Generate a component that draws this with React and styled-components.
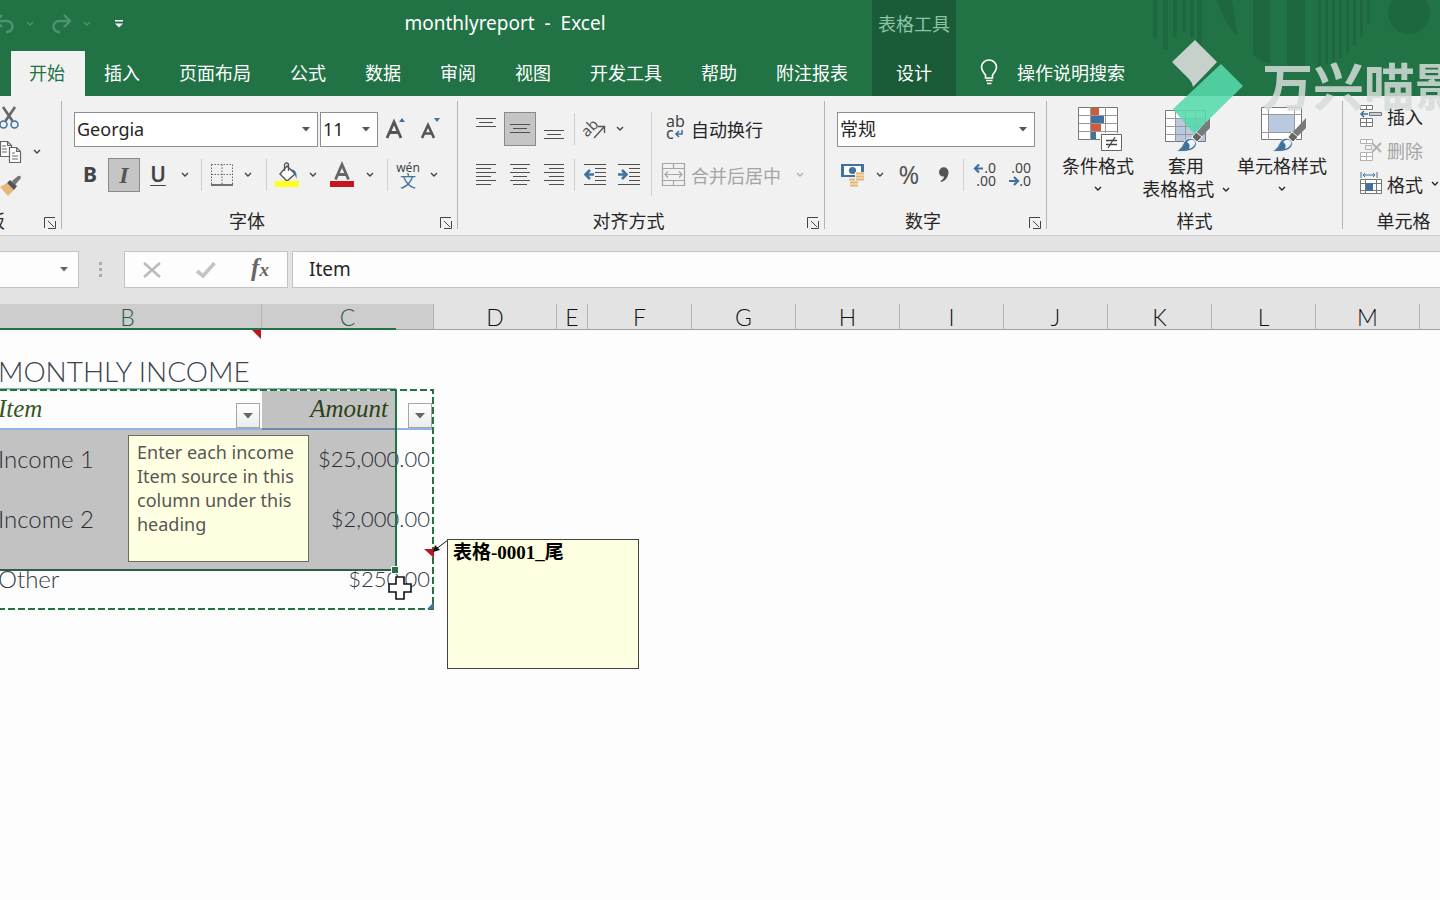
import React from "react";
import styled, { createGlobalStyle } from "styled-components";

const UI_FONT = `"Noto Sans", "Noto Sans CJK SC", sans-serif`;
const SHEET_FONT = `Lato, "Noto Sans CJK SC", sans-serif`;

const TABS = ["开始", "插入", "页面布局", "公式", "数据", "审阅", "视图", "开发工具", "帮助", "附注报表"];

const COLUMNS = [
  { name: "B", width: 268, selected: true },
  { name: "C", width: 172, selected: true },
  { name: "D", width: 123 },
  { name: "E", width: 31 },
  { name: "F", width: 104 },
  { name: "G", width: 104 },
  { name: "H", width: 104 },
  { name: "I", width: 104 },
  { name: "J", width: 104 },
  { name: "K", width: 104 },
  { name: "L", width: 104 },
  { name: "M", width: 104 },
];

const INCOME = [
  { item: "Income 1", amount: "$25,000.00" },
  { item: "Income 2", amount: "$2,000.00" },
  { item: "Other", amount: "$250.00" },
];

const Chevron = () => (
  <svg width="8" height="6" viewBox="0 0 8 6" fill="none" stroke="currentColor" strokeWidth="1.4">
    <path d="M1 1l3 3 3-3" />
  </svg>
);

const Lines = ({ rows, height = 22 }) => (
  <svg width="20" height={height} viewBox={`0 0 20 ${height}`} stroke="#505050">
    {rows.map(([x1, x2, y]) => (
      <path key={y} d={`M${x1} ${y + 0.5}H${x2}`} />
    ))}
  </svg>
);

const UndoIcon = ({ flip }) => (
  <svg width="22" height="20" viewBox="0 0 22 20" fill="none" stroke="currentColor" strokeWidth="2.4">
    <g transform={flip ? "translate(22 0) scale(-1 1)" : undefined}>
      <path d="M8 1L2 7l6 6M2 7h11a5.500 5.500 0 0 1 0 11h-1" />
    </g>
  </svg>
);

const ScissorsIcon = () => (
  <svg width="20" height="22" viewBox="0 0 20 22" fill="none">
    <path d="M3 0l9.500 14M15 0L5.500 14" stroke="#666" strokeWidth="2.600" />
    <circle cx="3.500" cy="17.500" r="3.500" stroke="#41719c" strokeWidth="1.500" />
    <circle cx="14.500" cy="17.500" r="3.500" stroke="#41719c" strokeWidth="1.500" />
  </svg>
);

const CopyIcon = () => (
  <svg width="22" height="22" viewBox="0 0 22 22" fill="#fff" stroke="#666" strokeWidth="1.200">
    <path d="M.5.5h7l4 4v11H.5zM7.500.5v4h4" />
    <path d="M9.500 6.500h7l4 4v11h-11zM16.500 6.500v4h4" />
    <path d="M2 5h4M2 8h5M2 11h5M12 12h3M12 15h6M12 18h6" />
  </svg>
);

const PainterIcon = () => (
  <svg width="22" height="22" viewBox="0 0 22 22">
    <path d="M0 12l7-4 7 7-6 6z" fill="#e5b77d" />
    <path d="M7 8l3-3 7 6-3 4z" fill="#555" />
    <path d="M12 6l6-5q3-1 3 2l-6 7z" fill="#777" />
  </svg>
);

const BordersIcon = () => (
  <svg width="22" height="22" viewBox="0 0 22 22" fill="none" stroke="#666">
    <path d="M.5.5h21v20M.5.5v20M11 .5v20M.5 10.500h21" strokeDasharray="1.500 1.500" />
    <path d="M0 21h22" stroke="#444" strokeWidth="1.500" />
  </svg>
);

const FillIcon = () => (
  <svg width="24" height="26" viewBox="0 0 24 26" fill="none">
    <path d="M12 4l8 8-8 7-7-7z" fill="#fff" stroke="#555" strokeWidth="1.400" />
    <path d="M9.500 9V3a2 2 0 0 1 4 0v6" stroke="#555" strokeWidth="1.300" />
    <path d="M16 7c5 1 6 4 5.500 10-1-3-2-5-3-6z" fill="#41719c" />
    <path d="M0 19h24v6H0z" fill="#ffff1e" />
  </svg>
);

const FontColorIcon = () => (
  <svg width="24" height="26" viewBox="0 0 24 26">
    <path d="M5.500 17.500L12 2.500l6.500 15M8 12.500h8" fill="none" stroke="#666" strokeWidth="2.800" />
    <path d="M0 19h24v6H0z" fill="#c8141c" />
  </svg>
);

const OrientationIcon = () => (
  <svg width="22" height="22" viewBox="0 0 22 22" fill="none" stroke="#555" strokeWidth="1.400">
    <text x="-1" y="14" transform="rotate(-45 8 12)" fontSize="15" fill="#555" stroke="none">ab</text>
    <path d="M10 20L20 9M14 8.500h6.500V15" />
  </svg>
);

const IndentIcon = ({ right }) => (
  <svg width="23" height="22" viewBox="0 0 23 22" fill="none" stroke="#505050">
    <path d="M0 .5h22M11 4.500h11M11 8.500h11M11 12.500h11M11 16.500h11M0 20.500h22" />
    <g transform={right ? "translate(10 0) scale(-1 1)" : undefined}>
      <path d="M10 10.500H2M6 6l-4.500 4.500L6 15" stroke="#41719c" strokeWidth="2.600" />
    </g>
  </svg>
);

const WrapIcon = () => (
  <svg width="24" height="24" viewBox="0 0 24 24" fill="none">
    <text x="4" y="10" fontSize="16" fill="#444">ab</text>
    <text x="4" y="22" fontSize="16" fill="#444">c</text>
    <path d="M20 13v4h-6M17 14l-3 3 3 3" stroke="#41719c" strokeWidth="1.600" />
  </svg>
);

const MergeIcon = () => (
  <svg width="24" height="24" viewBox="0 0 24 24" fill="none" stroke="#a5a5a5" strokeWidth="1.200">
    <path d="M.5.5h22v22H.5zM.5 5.500h22M.5 17.500h22M11.500.5v5M11.500 17.500v5M3 11.500h17M6 8.500l-3 3 3 3M17 8.500l3 3-3 3" />
  </svg>
);

const MoneyIcon = () => (
  <svg width="24" height="24" viewBox="0 0 24 24">
    <path d="M0 1h23v13H0z" fill="#41719c" />
    <path d="M3 3h17v9H3z" fill="#fff" />
    <circle cx="11.500" cy="7.500" r="3.600" fill="#41719c" />
    <path d="M14 9h9v9h-6v5H8v-8h6z" fill="#f1f1f1" />
    <path d="M15 10.500h8M15 13.500h8M15 16.500h8M8 16.500h6M9 19.500h8M9 22.500h8" stroke="#e3b673" strokeWidth="2" />
  </svg>
);

const DecimalIcon = ({ decrease }) => (
  <svg width="24" height="24" viewBox="0 0 24 24" fill="none">
    <text x="23" y="10" fontSize="14" fill="#444" textAnchor="end">{decrease ? ".00" : ".0"}</text>
    <text x="23" y="23" fontSize="14" fill="#444" textAnchor="end">{decrease ? ".0" : ".00"}</text>
    <path
      d={decrease ? "M1 18h8M6 14l4 4-4 4" : "M10 5.500H2M6 1.500l-4 4 4 4"}
      stroke="#41719c"
      strokeWidth="2.200"
    />
  </svg>
);

const BulbIcon = () => (
  <svg width="18" height="26" viewBox="0 0 18 26" fill="none" stroke="#fff" strokeWidth="1.600">
    <path d="M5.500 19v-3C3 13 1.500 11 1.500 8a7.500 7 0 0 1 15 0c0 3-1.500 5-4 8v3zM6 21.500h6.500M7 24.500h4.500" />
  </svg>
);

const LauncherIcon = () => (
  <svg width="12" height="12" viewBox="0 0 12 12" fill="none" stroke="#444">
    <path d="M.5 11V.5H11M4 4l6 6M11.500 4v7.500H4" />
  </svg>
);

const ConditionalIcon = () => (
  <svg width="44" height="46" viewBox="0 0 44 46" fill="none">
    <path d="M.5 1.500h39v32H.5z" fill="#fff" stroke="#777" />
    <path d="M.5 9.500h39M.5 17.500h39M.5 25.500h39M12.500 1v33M27.500 1v33" stroke="#999" />
    <path d="M13 2h8v7h-8zM13 18h10v7H13z" fill="#cd5b3f" />
    <path d="M13 10h13v7H13zM13 26h5v7h-5z" fill="#41719c" />
    <path d="M22 27h22v19H22z" fill="#f1f1f1" />
    <path d="M23.500 28.500h20v16h-20z" fill="#fff" stroke="#666" />
    <path d="M28 34.500h11M28 38.500h11M37 31l-7 11" stroke="#444" strokeWidth="1.300" />
  </svg>
);

const Brush = () => (
  <g>
    <path d="M45 12v10l-9 9-5-4z" fill="#7a7a7a" />
    <path d="M31 26l6 5-5 5-5-5z" fill="#666" stroke="#f1f1f1" />
    <path d="M11 45c5-2 6-5 8-9 3-5 10-5 12 0 2 7-7 11-20 9z" fill="#41719c" stroke="#f1f1f1" />
    <path d="M22 36c3-3 8-3 8 1 0 3-3 5-6 6 1-3 1-5-2-7z" fill="#eef5fb" />
  </g>
);

const TableStyleIcon = () => (
  <svg width="46" height="46" viewBox="0 0 46 46" fill="none">
    <path d="M.5 4.500h40v31H.5z" fill="#fff" stroke="#777" />
    <path d="M11 13h29v22H11z" fill="#b9c9df" />
    <path d="M.5 12.500h40M.5 20.500h40M.5 28.500h40M10.500 4v32M20.500 4v32M30.500 4v32" stroke="#999" />
    <Brush />
  </svg>
);

const CellStyleIcon = () => (
  <svg width="46" height="46" viewBox="0 0 46 46" fill="none">
    <path d="M.5 1.500h40v32H.5z" fill="#fff" stroke="#777" />
    <path d="M7.500 1v33M33.500 1v33M.5 8.500h40M.5 26.500h40" stroke="#999" />
    <path d="M8 9h25v17H8z" fill="#b9c9df" />
    <Brush />
  </svg>
);

const CellsIcon = ({ kind }) => (
  <svg width="22" height="24" viewBox="0 0 22 24" fill="none" stroke={kind === "delete" ? "#b1b1b1" : "#777"}>
    {kind === "format" ? (
      <g>
        <path d="M1 0v6M17 0v6M3 3h12M5 1L3 3l2 2M13 1l2 2-2 2" stroke="#41719c" />
        <path d="M.5 7.500h21v14H.5zM.5 11.500h21M.5 18.500h21M5.500 7.500v14M16.500 7.500v14" fill="#fff" />
        <path d="M6 11h7v8H6z" fill="#41719c" stroke="none" />
      </g>
    ) : (
      <g>
        <path d="M.5 1.500h12v4H.5zM6.500 1.500v4M.5 14.500h12v8H.5zM.5 18.500h12M6.500 14.500v8" fill="#fff" />
        {kind === "insert" ? (
          <g>
            <path d="M9.500 8.500h12v3h-12z" fill="#c7cfdd" />
            <path d="M8 10H1M4 7l-3 3 3 3" stroke="#41719c" strokeWidth="1.500" />
          </g>
        ) : (
          <g>
            <path d="M5.500 7.500h6v4h-6z" />
            <path d="M12 5l9 9M21 5l-9 9" strokeWidth="2" />
          </g>
        )}
      </g>
    )}
  </svg>
);

const HeaderArt = () => (
  <Art width="300" height="70" viewBox="0 0 300 70" fill="#1e6840">
    <path d="M13 0h4v38h-4zM23 0h5v50h-5zM33 0h4v38h-4zM42 0h4v32h-4zM50 0h4v38h-4zM57 0h5v50h-5z" />
    <path d="M77 0h15l6 36q-12-8-21-36zM113 0h17v64q-10-2-17-10zM147 0h18v66h-18z" />
    <path d="M178 0h3v66h-3zM185 0h3v64h-3zM192 0h3v62h-3zM199 0h3v58h-3zM206 0h3v53h-3zM213 0h3v46h-3zM220 0h3v37h-3zM227 0h3v24h-3z" />
    <circle cx="269" cy="13" r="21" />
  </Art>
);

const Group = ({ title, width, launcher, children }) => (
  <GroupBox $width={width}>
    {children}
    <GroupFooter>
      <GroupTitle>{title}</GroupTitle>
      {launcher && <Launcher aria-label={`${title}设置`}><LauncherIcon /></Launcher>}
    </GroupFooter>
  </GroupBox>
);

const Drop = ({ width = 18, disabled }) => (
  <ToolButton $width={width} aria-label="更多选项" disabled={disabled}><Chevron /></ToolButton>
);

const Header = () => (
  <HeaderBar>
    <HeaderMain>
      <TitleRow>
        <QuickAccess>
          <QuickButton $width={16} aria-label="撤消" disabled><UndoIcon /></QuickButton>
          <QuickButton $width={27} aria-label="撤消选项" disabled><Chevron /></QuickButton>
          <QuickButton $width={35} aria-label="恢复" disabled><UndoIcon flip /></QuickButton>
          <QuickButton $width={18} aria-label="恢复选项" disabled><Chevron /></QuickButton>
          <QuickButton $width={46} aria-label="自定义快速访问工具栏">
            <svg width="8" height="8" viewBox="0 0 8 8" fill="#fff"><path d="M0 0h8v1.500H0zM0 3.500h8l-4 4z" /></svg>
          </QuickButton>
        </QuickAccess>
        <DocTitle>monthlyreport&nbsp; -&nbsp; Excel</DocTitle>
      </TitleRow>
      <Tabs>
        {TABS.map((tab, i) => <Tab key={tab} $active={i === 0}>{tab}</Tab>)}
      </Tabs>
    </HeaderMain>
    <ContextTabs>
      <ContextTitle>表格工具</ContextTitle>
      <ContextTab>设计</ContextTab>
    </ContextTabs>
    <HeaderSide>
      <HeaderArt />
      <TellMe><BulbIcon />操作说明搜索</TellMe>
    </HeaderSide>
  </HeaderBar>
);

const Ribbon = () => (
  <RibbonBar>
    <GroupBox $width={62}>
      <ClipboardTools>
        <ToolButton $width={20} $align="flex-start" aria-label="剪切"><ScissorsIcon /></ToolButton>
        <ToolRow>
          <ToolButton $width={22} $align="flex-end" aria-label="复制"><CopyIcon /></ToolButton>
          <Drop width={26} />
        </ToolRow>
        <ToolButton $width={22} $align="flex-start" aria-label="格式刷"><PainterIcon /></ToolButton>
      </ClipboardTools>
      <GroupFooter>
        <ClippedTitle>剪贴板</ClippedTitle>
        <Launcher aria-label="剪贴板设置"><LauncherIcon /></Launcher>
      </GroupFooter>
    </GroupBox>

    <Group title="字体" width={396} launcher>
      <GroupTools>
        <ToolRow>
          <SelectBox $width={244}>
            <select aria-label="字体" defaultValue="Georgia"><option>Georgia</option></select>
          </SelectBox>
          <SelectBox $width={58}>
            <select aria-label="字号" defaultValue="11"><option>11</option></select>
          </SelectBox>
          <ToolButton $width={32} aria-label="增大字号">
            <svg width="22" height="24" viewBox="0 0 22 24">
              <path d="M2 21L9 5l7 16M4.500 15.500h9" fill="none" stroke="#555" strokeWidth="2.800" />
              <path d="M14 5l3-4 3 4z" fill="#41719c" />
            </svg>
          </ToolButton>
          <ToolButton $width={34} aria-label="减小字号">
            <svg width="22" height="24" viewBox="0 0 22 24">
              <path d="M2 21L8 8l6 13M4.500 16.500h7" fill="none" stroke="#555" strokeWidth="2.600" />
              <path d="M14 1h6l-3 4z" fill="#41719c" />
            </svg>
          </ToolButton>
        </ToolRow>
        <ToolRow>
          <ToolButton $width={32}><BoldMark>B</BoldMark></ToolButton>
          <ToolButton $width={32} $pressed><ItalicMark>I</ItalicMark></ToolButton>
          <ToolButton $width={32}><UnderlineMark>U</UnderlineMark></ToolButton>
          <Drop />
          <Divider $margin={5} />
          <ToolButton $width={26} aria-label="边框"><BordersIcon /></ToolButton>
          <Drop width={22} />
          <Divider $margin={5} />
          <ToolButton $width={26} aria-label="填充颜色"><FillIcon /></ToolButton>
          <Drop width={22} />
          <ToolButton $width={32} aria-label="字体颜色"><FontColorIcon /></ToolButton>
          <Drop width={20} />
          <Divider $margin={5} />
          <ToolButton $width={26}><Pinyin>wén<b>文</b></Pinyin></ToolButton>
          <Drop width={22} />
        </ToolRow>
      </GroupTools>
    </Group>

    <Group title="对齐方式" width={367} launcher>
      <SplitTools>
        <ToolStack>
          <ToolRow>
            <ToolButton $width={32} aria-label="顶端对齐"><Lines rows={[[0, 20, 0], [3, 17, 4], [0, 20, 8]]} /></ToolButton>
            <ToolButton $width={32} $pressed aria-label="垂直居中"><Lines rows={[[0, 20, 6], [3, 17, 10], [0, 20, 14]]} /></ToolButton>
            <ToolButton $width={32} aria-label="底端对齐"><Lines rows={[[0, 20, 12], [3, 17, 16], [0, 20, 20]]} /></ToolButton>
            <Divider $margin={2} />
            <ToolButton $width={32} aria-label="方向"><OrientationIcon /></ToolButton>
            <Drop width={14} />
          </ToolRow>
          <ToolRow>
            <ToolButton $width={32} aria-label="左对齐"><Lines rows={[[0, 20, 0], [0, 15, 4], [0, 20, 8], [0, 15, 12], [0, 20, 16], [0, 15, 20]]} /></ToolButton>
            <ToolButton $width={32} aria-label="居中"><Lines rows={[[0, 20, 0], [3, 17, 4], [0, 20, 8], [3, 17, 12], [0, 20, 16], [3, 17, 20]]} /></ToolButton>
            <ToolButton $width={32} aria-label="右对齐"><Lines rows={[[0, 20, 0], [5, 20, 4], [0, 20, 8], [5, 20, 12], [0, 20, 16], [5, 20, 20]]} /></ToolButton>
            <Divider $margin={2} />
            <ToolButton $width={32} aria-label="减少缩进量"><IndentIcon /></ToolButton>
            <ToolButton $width={32} aria-label="增加缩进量"><IndentIcon right /></ToolButton>
          </ToolRow>
        </ToolStack>
        <TallDivider />
        <ToolStack>
          <ToolRow><TextButton><WrapIcon />自动换行</TextButton></ToolRow>
          <ToolRow>
            <TextButton disabled><MergeIcon />合并后居中</TextButton>
            <Drop width={34} disabled />
          </ToolRow>
        </ToolStack>
      </SplitTools>
    </Group>

    <Group title="数字" width={222} launcher>
      <GroupTools>
        <ToolRow>
          <SelectBox $width={198}>
            <select aria-label="数字格式" defaultValue="常规"><option>常规</option></select>
          </SelectBox>
        </ToolRow>
        <ToolRow>
          <ToolButton $width={32} aria-label="会计数字格式"><MoneyIcon /></ToolButton>
          <Drop />
          <ToolButton $width={36}><PercentMark>%</PercentMark></ToolButton>
          <ToolButton $width={30} aria-label="千位分隔样式">
            <svg width="12" height="16" viewBox="0 0 12 16" fill="#555">
              <path d="M1 5a4.500 4.500 0 0 1 9.500 0c0 5-3 9-7.500 10l-.5-1c2-1 3.500-3 3.500-4.500C3 10 1 8 1 5z" />
            </svg>
          </ToolButton>
          <Divider $margin={2} />
          <ToolButton $width={34} aria-label="增加小数位数"><DecimalIcon /></ToolButton>
          <ToolButton $width={32} aria-label="减少小数位数"><DecimalIcon decrease /></ToolButton>
        </ToolRow>
      </GroupTools>
    </Group>

    <Group title="样式" width={296}>
      <StyleTools>
        <BigButton $width={86}><ConditionalIcon /><span>条件格式</span><Chevron /></BigButton>
        <BigButton $width={90}>
          <TableStyleIcon />
          <span>套用</span>
          <span>表格格式 <Chevron /></span>
        </BigButton>
        <BigButton $width={102}><CellStyleIcon /><span>单元格样式</span><Chevron /></BigButton>
      </StyleTools>
    </Group>

    <Group title="单元格" width={122}>
      <CellTools>
        <CellButton $gap={12}><CellsIcon kind="insert" />插入<Chevron /></CellButton>
        <CellButton $gap={12} disabled><CellsIcon kind="delete" />删除<Chevron /></CellButton>
        <CellButton $gap={3}><CellsIcon kind="format" />格式<Chevron /></CellButton>
      </CellTools>
    </Group>
  </RibbonBar>
);

const FormulaBar = () => (
  <FormulaRow>
    <NameBox>
      <input aria-label="名称框" />
      <svg width="8" height="5" viewBox="0 0 8 5" fill="#666"><path d="M0 0h8L4 4.500z" /></svg>
    </NameBox>
    <Grip><i /><i /><i /></Grip>
    <FormulaButtons>
      <ToolButton $width={54} aria-label="取消">
        <svg width="18" height="16" viewBox="0 0 18 16" fill="none" stroke="#bbb" strokeWidth="2.600"><path d="M1 1l16 14M17 1L1 15" /></svg>
      </ToolButton>
      <ToolButton $width={54} aria-label="输入">
        <svg width="20" height="16" viewBox="0 0 20 16" fill="none" stroke="#c4c4c4" strokeWidth="3.600"><path d="M1 9l6 5L18.500 1" /></svg>
      </ToolButton>
      <ToolButton $width={54}><FxMark>f<small>x</small></FxMark></ToolButton>
    </FormulaButtons>
    <FormulaInput aria-label="编辑栏" defaultValue="Item" />
  </FormulaRow>
);

const FilterButton = ({ label }) => (
  <Filter aria-label={label}>
    <svg width="10" height="6" viewBox="0 0 10 6" fill="#666"><path d="M0 0h10L5 5.500z" /></svg>
  </Filter>
);

const Sheet = () => (
  <SheetArea>
    <Grid>
      <colgroup>
        {COLUMNS.map((col) => <Col key={col.name} $width={col.width} />)}
        <col />
      </colgroup>
      <thead>
        <tr>
          {COLUMNS.map((col) => (
            <ColumnHead key={col.name} scope="col" $selected={col.selected}>{col.name}</ColumnHead>
          ))}
          <ColumnHead aria-hidden="true" />
        </tr>
      </thead>
      <tbody>
        <tr><TitleCell colSpan={13}>MONTHLY INCOME</TitleCell></tr>
        <tr>
          <FieldCell><Field>Item<FilterButton label="筛选 Item" /></Field></FieldCell>
          <FieldCell><Field $end>Amount<FilterButton label="筛选 Amount" /></Field></FieldCell>
        </tr>
        {INCOME.map((row) => (
          <tr key={row.item}>
            <ItemCell>{row.item}</ItemCell>
            <AmountCell>{row.amount}</AmountCell>
          </tr>
        ))}
      </tbody>
    </Grid>

    <Overlay width="660" height="380" viewBox="0 0 660 380" fill="none">
      <path d="M262 86h133v181H0V126h262z" fill="#000" fillOpacity=".23" />
      <path d="M0 25h396" stroke="#217346" strokeWidth="2" />
      <path d="M0 86h396v181" stroke="#217346" strokeWidth="2" />
      <path d="M0 266h392" stroke="#2c5f45" strokeWidth="2" />
      <path d="M0 86h433v219H0" stroke="#fff" strokeWidth="2" />
      <path d="M0 85h396" stroke="#217346" />
      <path d="M0 86h433v219H0" stroke="#217346" strokeWidth="2" strokeDasharray="7 3" />
      <path d="M391.500 262.500h7v7h-7z" fill="#217346" stroke="#fff" />
      <path d="M252 26h9v9zM424 245h10v9z" fill="#c1121f" />
      <path d="M434 298v7h-7z" fill="#41719c" />
      <path d="M448 236l-12 9" stroke="#111" />
      <path d="M433 248l2-7 5 5z" fill="#111" />
      <path d="M396 273h8v7h7v8h-7v7h-8v-7h-7v-8h7z" fill="#fff" stroke="#111" strokeWidth="1.600" />
    </Overlay>
    <InputHint>Enter each income Item source in this column under this heading</InputHint>
    <CellComment>表格-0001_尾</CellComment>
  </SheetArea>
);

const Watermark = () => (
  <WatermarkBox>
    <svg width="74" height="100" viewBox="0 0 74 100">
      <path d="M25 0l22 22-24 25q-1-5-4-8L2 22z" fill="#d8dcd9" fillOpacity=".9" />
      <path d="M51 24l22 22-49 48L3 69z" fill="#55d9ab" fillOpacity=".88" />
    </svg>
    <span>万兴喵影</span>
  </WatermarkBox>
);

const App = () => (
  <Window>
    <GlobalStyle />
    <Header />
    <Ribbon />
    <FormulaBar />
    <Sheet />
    <Watermark />
  </Window>
);

const GlobalStyle = createGlobalStyle`
  * {
    box-sizing: border-box;
  }
  body {
    margin: 0;
    background: #fdfdfd;
    font-family: ${UI_FONT};
    font-size: 18px;
    color: #262626;
  }
  button, input, select {
    margin: 0;
    padding: 0;
    border: none;
    background: none;
    font: inherit;
    color: inherit;
  }
  svg {
    flex: none;
    overflow: visible;
  }
`;

const Window = styled.div`
  position: relative;
  display: flex;
  flex-direction: column;
  min-height: 100vh;
  overflow: hidden;
`;

const HeaderBar = styled.header`
  display: flex;
  height: 96px;
  background: #217346;
  color: #fff;
`;

const HeaderMain = styled.div`
  flex: none;
  padding-right: 4px;
`;

const TitleRow = styled.div`
  display: flex;
  align-items: center;
  height: 48px;
`;

const QuickAccess = styled.div`
  display: flex;
  align-items: center;
  width: 142px;
`;

const QuickButton = styled.button`
  display: flex;
  justify-content: ${({ $width }) => ($width === 16 ? "flex-end" : "center")};
  width: ${({ $width }) => $width}px;
  color: #4f936c;
`;

const DocTitle = styled.div`
  flex: 1;
  padding-bottom: 2px;
  font-size: 19px;
  text-align: center;
`;

const Tabs = styled.nav`
  display: flex;
  gap: 1px;
  height: 48px;
  padding: 3px 0 0 11px;
`;

const Tab = styled.button`
  padding: 0 20px 4px 18px;
  white-space: nowrap;
  background: ${({ $active }) => ($active ? "#f1f1f1" : "none")};
  color: ${({ $active }) => ($active ? "#217346" : "#fff")};
`;

const ContextTabs = styled.div`
  display: flex;
  flex: none;
  flex-direction: column;
  width: 84px;
  background: #1a5c38;
`;

const ContextTitle = styled.div`
  height: 51px;
  line-height: 48px;
  text-align: center;
  color: #8fc3a6;
`;

const ContextTab = styled.button`
  flex: 1;
  padding-bottom: 4px;
`;

const HeaderSide = styled.div`
  position: relative;
  display: flex;
  flex: 1;
  align-items: flex-end;
`;

const Art = styled.svg`
  position: absolute;
  top: 0;
  right: 0;
`;

const TellMe = styled.button`
  display: flex;
  gap: 19px;
  align-items: center;
  height: 45px;
  padding: 0 0 4px 24px;
  white-space: nowrap;
`;

const RibbonBar = styled.div`
  display: flex;
  height: 140px;
  border-bottom: 1px solid #d2d2d2;
  background: #f1f1f1;
`;

const GroupBox = styled.section`
  display: flex;
  flex: none;
  flex-direction: column;
  justify-content: space-between;
  width: ${({ $width }) => $width}px;
  margin: 5px 0 6px;
  border-right: 1px solid #b4b4b4;
`;

const GroupFooter = styled.div`
  display: flex;
  align-items: center;
  height: 16px;
`;

const GroupTitle = styled.div`
  flex: 1;
  text-align: center;
  line-height: 18px;
`;

const ClippedTitle = styled.div`
  display: flex;
  justify-content: flex-end;
  width: 5px;
  margin-right: auto;
  overflow: hidden;
  white-space: nowrap;
  line-height: 18px;
`;

const Launcher = styled.button`
  display: flex;
  padding: 4px 5px 0 8px;
`;

const GroupTools = styled.div`
  display: flex;
  flex-direction: column;
  gap: 12px;
  padding: 11px 0 0 12px;
`;

const SplitTools = styled.div`
  display: flex;
  padding: 11px 0 0 12px;
`;

const ToolStack = styled.div`
  display: flex;
  flex-direction: column;
  gap: 12px;
`;

const ToolRow = styled.div`
  display: flex;
  gap: 2px;
  align-items: center;
  height: 34px;
`;

const ToolButton = styled.button`
  display: flex;
  flex: none;
  align-items: center;
  justify-content: ${({ $align }) => $align || "center"};
  width: ${({ $width }) => $width}px;
  height: 34px;
  border: ${({ $pressed }) => ($pressed ? "1px solid #8a8a8a" : "none")};
  background: ${({ $pressed }) => ($pressed ? "#c5c5c5" : "none")};
  color: ${({ disabled }) => (disabled ? "#b1b1b1" : "#444")};
`;

const TextButton = styled.button`
  display: flex;
  gap: 5px;
  align-items: center;
  white-space: nowrap;
  color: ${({ disabled }) => (disabled ? "#a5a5a5" : "#262626")};
`;

const CellButton = styled(TextButton)`
  height: 24px;

  svg:last-child {
    margin-left: ${({ $gap }) => $gap}px;
  }
`;

const Divider = styled.i`
  width: 1px;
  height: 32px;
  margin: 0 ${({ $margin }) => $margin}px;
  background: #d0d0d0;
`;

const TallDivider = styled.i`
  width: 1px;
  height: 84px;
  margin: 0 10px 0 6px;
  background: #d0d0d0;
`;

const SelectBox = styled.label`
  width: ${({ $width }) => $width}px;
  height: 35px;
  border: 1px solid #8e8e8e;
  background: #fff;

  select {
    width: 100%;
    height: 100%;
    padding: 0 2px;
    appearance: none;
    background: url("data:image/svg+xml,%3Csvg xmlns='http://www.w3.org/2000/svg' width='8' height='5'%3E%3Cpath d='M0 0h8L4 4.500z' fill='%23555'/%3E%3C/svg%3E") no-repeat right 7px center;
  }
`;

const BoldMark = styled.b`
  padding-bottom: 2px;
  font-size: 21px;
  color: #444;
`;

const ItalicMark = styled.i`
  font: italic bold 24px "Liberation Serif", serif;
  color: #555;
`;

const UnderlineMark = styled.u`
  padding-bottom: 2px;
  font-size: 21px;
  font-weight: 600;
  text-decoration-thickness: 1px;
  text-underline-offset: 3px;
`;

const Pinyin = styled.span`
  display: flex;
  flex-direction: column;
  align-items: center;
  font-size: 12px;
  line-height: 11px;

  b {
    font-size: 16px;
    font-weight: 400;
    line-height: 16px;
    color: #41719c;
  }
`;

const PercentMark = styled.span`
  padding-bottom: 2px;
  font-size: 25px;
  color: #555;
`;

const StyleTools = styled.div`
  display: flex;
  padding: 5px 0 0 8px;
`;

const BigButton = styled.button`
  display: flex;
  flex-direction: column;
  align-items: center;
  width: ${({ $width }) => $width}px;
  line-height: 23px;
  white-space: nowrap;

  svg:first-child {
    margin: 0 0 3px 4px;
  }
  span + svg {
    margin-top: 8px;
  }
  span svg:last-child {
    margin: 0 0 3px 3px;
  }
`;

const CellTools = styled.div`
  display: flex;
  flex-direction: column;
  gap: 10px;
  padding: 3px 0 0 17px;
`;

const ClipboardTools = styled.div`
  display: flex;
  flex-direction: column;
  height: 102px;
`;

const FormulaRow = styled.div`
  display: flex;
  height: 68px;
  padding: 15px 0 16px;
  background: #e3e3e3;
`;

const NameBox = styled.label`
  display: flex;
  align-items: center;
  width: 79px;
  padding-right: 10px;
  border: 1px solid #c3c3c3;
  border-left: none;
  background: #fdfdfd;

  input {
    flex: 1;
    min-width: 0;
  }
`;

const Grip = styled.div`
  display: flex;
  flex-direction: column;
  gap: 3px;
  align-items: center;
  justify-content: center;
  width: 45px;
  padding-right: 3px;

  i {
    width: 3px;
    height: 3px;
    background: #ababab;
  }
`;

const FormulaButtons = styled.div`
  display: flex;
  align-items: center;
  width: 164px;
  margin-right: 4px;
  border: 1px solid #c3c3c3;
  background: #fdfdfd;
`;

const FxMark = styled.span`
  padding-bottom: 4px;
  font: italic bold 25px "Liberation Serif", serif;
  color: #666;

  small {
    font-size: 19px;
  }
`;

const FormulaInput = styled.input`
  flex: 1;
  min-width: 0;
  padding: 0 0 2px 16px;
  border: 1px solid #c3c3c3;
  border-right: none;
  background: #fdfdfd;
  font-size: 19px;
`;

const SheetArea = styled.main`
  position: relative;
  flex: 1;
  overflow: hidden;
`;

/* the sheet is scrolled a little to the right, so column B starts off screen */
const Grid = styled.table`
  width: calc(100% + 6px);
  min-width: 1426px;
  margin-left: -6px;
  table-layout: fixed;
  border-collapse: separate;
  border-spacing: 0;
  font-family: ${SHEET_FONT};
  font-weight: 300;
`;

const Col = styled.col`
  width: ${({ $width }) => $width}px;
`;

const ColumnHead = styled.th`
  height: 26px;
  padding: 0;
  border-right: 1px solid #b4b4b4;
  border-bottom: 1px solid #a0a0a0;
  background: ${({ $selected }) => ($selected ? "#cdcdcd" : "#e3e3e3")};
  font-size: 23px;
  font-weight: 300;
  line-height: 24px;
  color: ${({ $selected }) => ($selected ? "#215c3d" : "#111")};

  &:last-child {
    border-right: none;
  }
`;

const TitleCell = styled.td`
  height: 60px;
  padding: 22px 0 0 4px;
  font-size: 28px;
  line-height: 36px;
  color: #38434d;
`;

const FieldCell = styled.td`
  height: 40px;
  padding: 0;
  border-bottom: 2px solid #8db4e2;
  font: italic 25px "Liberation Serif", serif;
  color: #375623;
`;

const Field = styled.div`
  display: flex;
  gap: 20px;
  align-items: center;
  justify-content: ${({ $end }) => ($end ? "flex-end" : "space-between")};
  height: 38px;
  padding: 0 2px 0 4px;
`;

const Filter = styled.button`
  display: flex;
  align-items: center;
  align-self: flex-end;
  justify-content: center;
  width: 24px;
  height: 25px;
  border: 1px solid #a6a6a6;
  background: linear-gradient(#fff, #eaecef);
`;

const ItemCell = styled.td`
  height: 60px;
  padding: 0 0 2px 4px;
  font-size: 24px;
  line-height: 30px;
  color: #333c46;
`;

const AmountCell = styled(ItemCell)`
  padding: 0 4px 2px 0;
  font-size: 22px;
  text-align: right;
`;

const Overlay = styled.svg`
  position: absolute;
  top: 0;
  left: 0;
`;

const InputHint = styled.div`
  position: absolute;
  top: 131px;
  left: 128px;
  width: 181px;
  height: 127px;
  padding: 4px 8px;
  border: 1px solid #6b6b5a;
  background: #ffffe1;
  line-height: 24px;
  color: #575757;
`;

const CellComment = styled.div`
  position: absolute;
  top: 235px;
  left: 447px;
  width: 192px;
  height: 130px;
  padding: 1px 5px;
  border: 1px solid #444;
  background: #ffffe1;
  font: bold 19px/24px "Liberation Serif", "Noto Sans CJK SC", serif;
  color: #000;
`;

const WatermarkBox = styled.div`
  position: absolute;
  top: 40px;
  left: 1170px;
  display: flex;
  gap: 18px;
  font-size: 51px;
  font-weight: 700;
  line-height: 92px;
  white-space: nowrap;
  color: rgba(212, 220, 216, 0.85);
  pointer-events: none;
`;

export default App;
